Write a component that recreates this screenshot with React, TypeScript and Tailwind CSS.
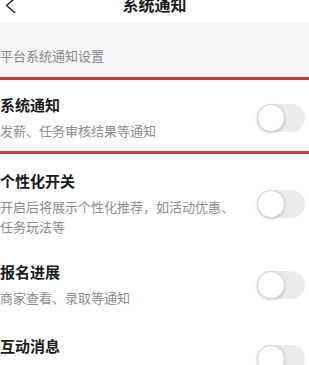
import { useState } from "react";

interface NoticeItem {
  title: string;
  desc: string;
  pt: string;
  pb: string;
}

const items: NoticeItem[] = [
  { title: "系统通知", desc: "发薪、任务审核结果等通知", pt: "pt-[14px]", pb: "pb-[10px]" },
  { title: "个性化开关", desc: "开启后将展示个性化推荐，如活动优惠、任务玩法等", pt: "pt-[16px]", pb: "pb-[12px]" },
  { title: "报名进展", desc: "商家查看、录取等通知", pt: "pt-[12px]", pb: "pb-[13px]" },
  { title: "互动消息", desc: "点赞回复、官方评论等通知", pt: "pt-[14px]", pb: "pb-[13px]" },
];

function Toggle({ on, onClick }: { on: boolean; onClick: () => void }) {
  return (
    <button
      onClick={onClick}
      className={`relative h-[28px] w-[48px] shrink-0 rounded-full ${on ? "bg-[#e8352f]" : "bg-[#ebebeb]"}`}
    >
      <span
        className={`absolute top-0 h-[28px] w-[28px] rounded-full border border-[#d6d6d6] bg-white shadow-[0_1px_3px_rgba(0,0,0,0.2)] ${on ? "left-[20px]" : "left-0"}`}
      />
    </button>
  );
}

export default function App() {
  const [state, setState] = useState([false, false, false, false]);

  return (
    <div
      className="h-[365px] w-[309px] overflow-hidden bg-white"
      style={{ fontFamily: '"Noto Sans CJK SC", "Noto Sans", sans-serif' }}
    >
      {/* Header */}
      <div className="relative flex h-[23px] items-start justify-center">
        <svg className="absolute left-[3px] top-[-1px] h-[14px] w-[14px]" viewBox="0 0 14 14" fill="none">
          <path d="M12 -1L3.5 6.5L12 14" stroke="#222" strokeWidth={1.4} strokeLinecap="round" strokeLinejoin="round" />
        </svg>
        <span className="text-[16px] font-bold leading-[9px] text-[#1a1a1a]">系统通知</span>
      </div>

      {/* Section label */}
      <div className="flex h-[54px] items-center bg-[#f5f5f7] pt-[12px]">
        <span className="text-[13px] leading-[20px] text-[#8a8a8a]">平台系统通知设置</span>
      </div>
      <div className="h-[3px] bg-[#d23a36]" />

      {items.map((item, i) => (
        <div key={item.title}>
          <div className={`flex items-center pr-[4px] ${item.pt} ${item.pb}`}>
            <div className="w-[243px]">
              <p className="text-[15px] font-bold leading-[22px] text-[#1a1a1a]">{item.title}</p>
              <p className="mt-[5px] text-[13px] leading-[20px] text-[#8c8c8c]">{item.desc}</p>
            </div>
            <div className="flex flex-1 justify-end">
              <Toggle
                on={state[i]}
                onClick={() => setState((s) => s.map((v, j) => (j === i ? !v : v)))}
              />
            </div>
          </div>
          {i === 0 && <div className="h-[3px] bg-[#d23a36]" />}
        </div>
      ))}
    </div>
  );
}
